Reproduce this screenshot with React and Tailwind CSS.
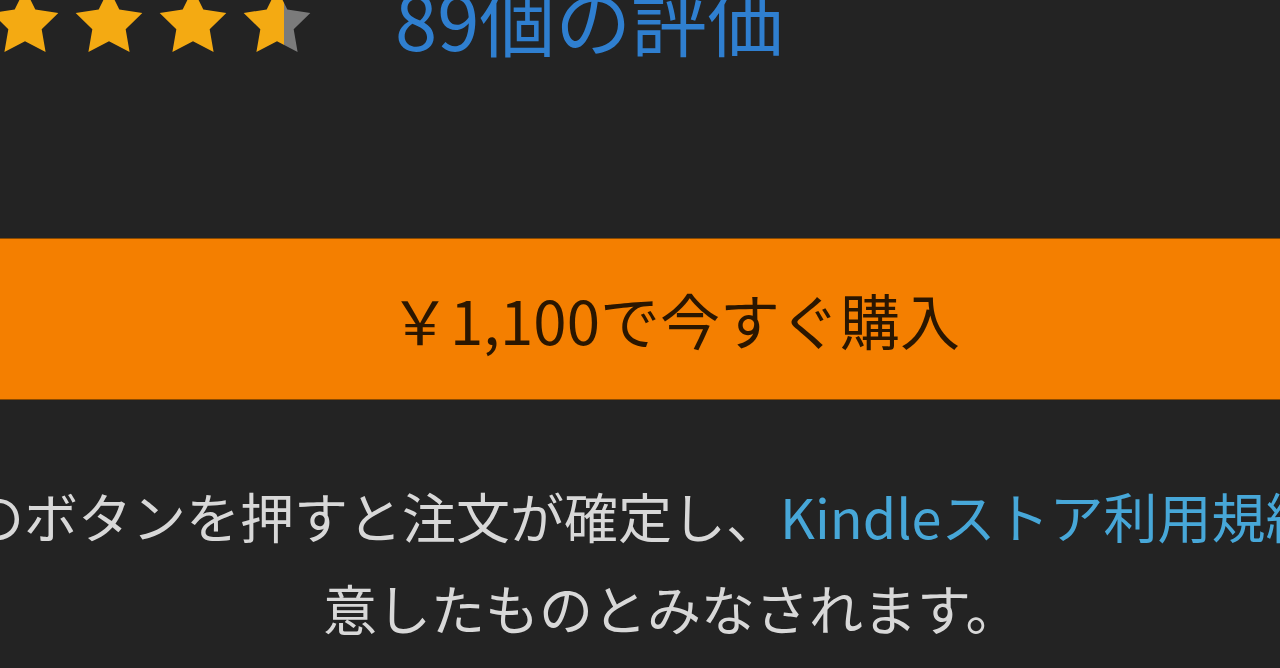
import React from 'react';

const Star = ({ fill = 1 }) => {
  const id = `half-${Math.round(fill * 100)}`;
  return (
    <svg viewBox="0 0 24 24" className="w-[80px] h-[80px] shrink-0">
      <defs>
        <linearGradient id={id} x1="0" x2="1" y1="0" y2="0">
          <stop offset={`${fill * 100}%`} stopColor="#f4aa12" />
          <stop offset={`${fill * 100}%`} stopColor="#7b7b7b" />
        </linearGradient>
      </defs>
      <polygon
        points="12,2 15.09,8.26 22,9.27 17,14.14 18.18,21.02 12,17.77 5.82,21.02 7,14.14 2,9.27 8.91,8.26"
        fill={`url(#${id})`}
      />
    </svg>
  );
};

export default function App() {
  return (
    <div
      className="w-full h-[668px] overflow-hidden bg-[#232323]"
      style={{ fontFamily: '"Noto Sans CJK JP", "Noto Sans", sans-serif' }}
    >
      {/* Rating */}
      <div className="flex items-start h-[56px]">
        <div className="flex gap-[4px] -mt-[18px] -ml-[15px]">
          <Star />
          <Star />
          <Star />
          <Star fill={0.6} />
        </div>
        <span className="ml-[78px] -mt-[20px] text-[76px] leading-none text-[#2f7fd0] whitespace-nowrap">
          89個の評価
        </span>
      </div>

      {/* Buy button */}
      <div className="mt-[182px] h-[162px] bg-[#f47f00] border-y border-[#8a4a00] flex items-center justify-center pl-[70px]">
        <span className="text-[60px] leading-none text-[#2a1600] whitespace-nowrap">￥1,100で今すぐ購入</span>
      </div>

      {/* Notice */}
      <div className="mt-[70px] text-[54px] leading-[92px] text-[#d8d8d8] whitespace-nowrap">
        <div className="-ml-[84px]">
          このボタンを押すと注文が確定し、<span className="text-[#47a7d8]">Kindleストア利用規約</span>に同
        </div>
        <div className="pl-[323px]">意したものとみなされます。</div>
      </div>
    </div>
  );
}
